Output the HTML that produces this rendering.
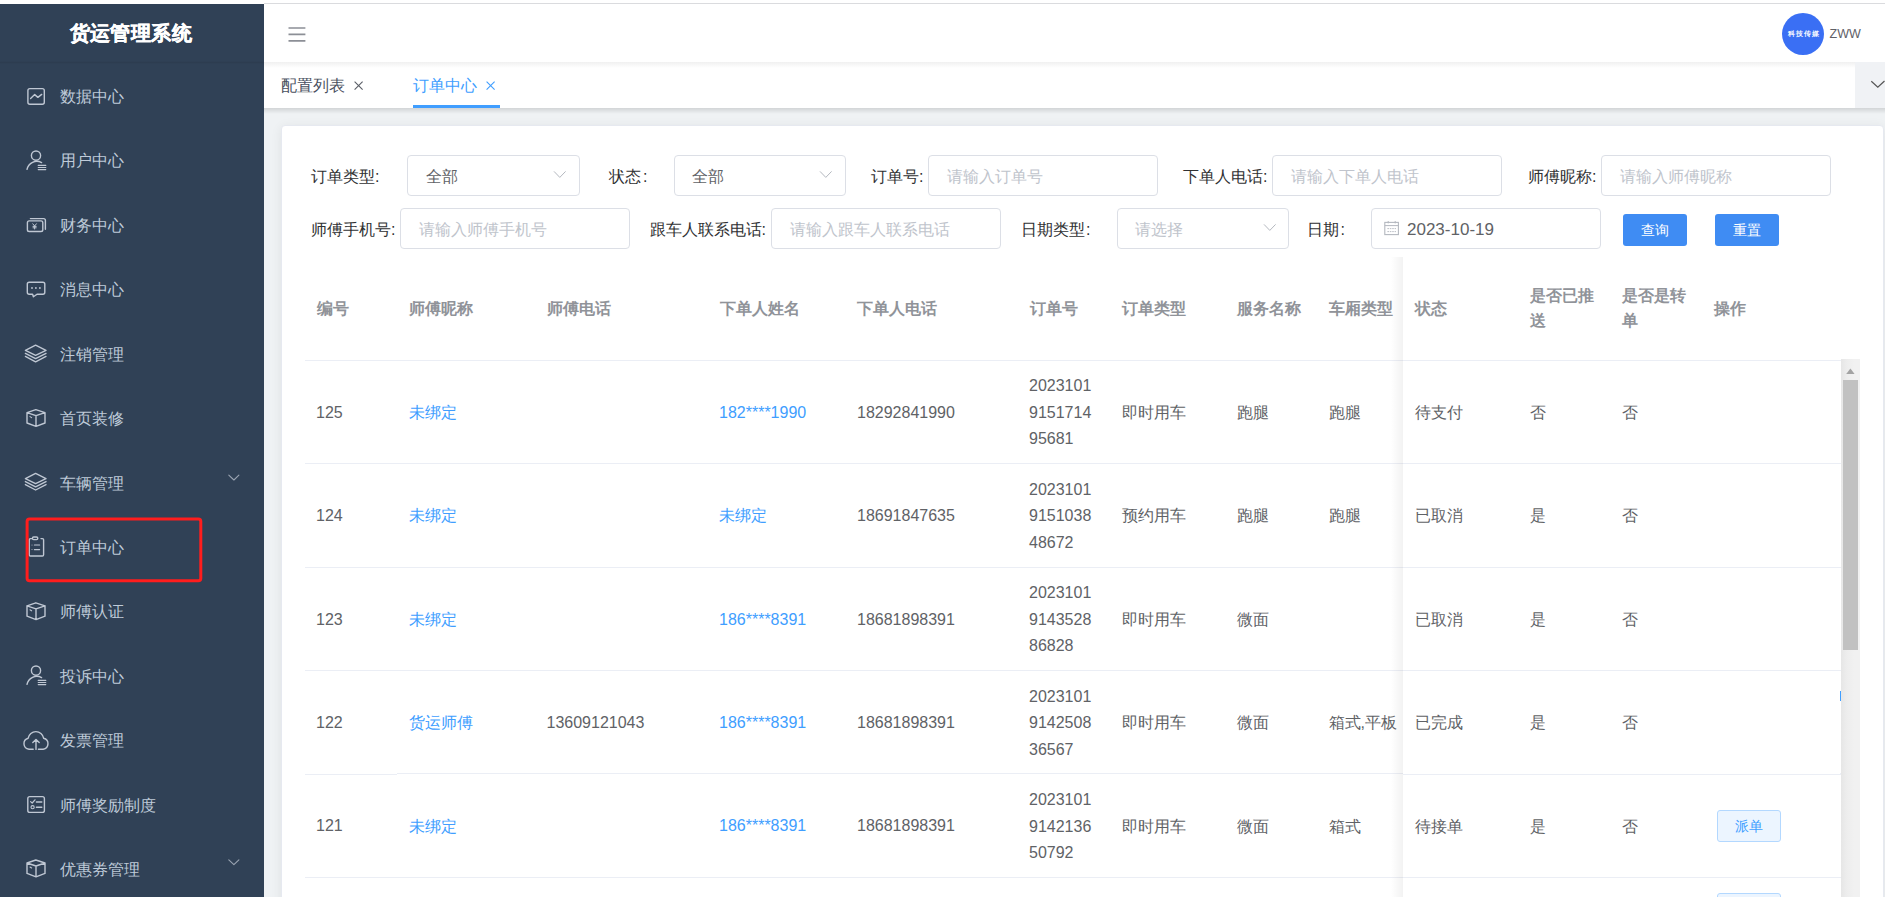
<!DOCTYPE html>
<html><head><meta charset="utf-8">
<style>
*{box-sizing:border-box;margin:0;padding:0}
html,body{width:1885px;height:897px;overflow:hidden;background:#fff;font-family:"Liberation Sans",sans-serif;}
.a{position:absolute;white-space:nowrap}
.t16{font-size:16px;line-height:16px}
#sb{position:absolute;left:0;top:4px;width:264px;height:893px;background:#304156}
.mi{position:absolute;left:60px;font-size:16px;line-height:16px;color:#bfcbd9;white-space:nowrap}
.lbl{position:absolute;font-size:16px;line-height:16px;color:#303133;white-space:nowrap}
.box{position:absolute;border:1px solid #dcdfe6;border-radius:4px;background:#fff}
.ph{position:absolute;font-size:16px;line-height:16px;color:#c0c4cc;white-space:nowrap}
.val{position:absolute;font-size:16px;line-height:16px;color:#606266;white-space:nowrap}
.btn{position:absolute;background:#3f8cf3;border-radius:3px;color:#fff;font-size:14px;line-height:32px;text-align:center}
.th{position:absolute;font-size:16px;line-height:16px;color:#909399;font-weight:bold;white-space:nowrap}
.td{position:absolute;font-size:16px;line-height:16px;color:#606266;white-space:nowrap}
.tdm{position:absolute;font-size:16px;line-height:26.5px;color:#606266;white-space:nowrap}
.lk{color:#409eff}
.hl{position:absolute;left:305px;width:1536px;height:1px;background:#ebeef5}
</style></head><body>
<!-- top line -->
<div class="a" style="left:264px;top:3px;width:1621px;height:1px;background:#dadbde"></div>

<!-- sidebar -->
<div id="sb"></div>
<div class="a" style="left:0;top:61px;width:264px;height:3px;background:linear-gradient(rgba(0,0,0,0),rgba(0,0,0,.07) 50%,rgba(0,0,0,0))"></div>
<div class="a" style="left:69.5px;top:22.5px;font-size:20.2px;line-height:21px;font-weight:bold;color:#fff;letter-spacing:0.45px;-webkit-text-stroke:0.4px #fff">货运管理系统</div>
<div class="mi" style="top:89px">数据中心</div>
<div class="mi" style="top:153.4px">用户中心</div>
<div class="mi" style="top:217.8px">财务中心</div>
<div class="mi" style="top:282.3px">消息中心</div>
<div class="mi" style="top:346.7px">注销管理</div>
<div class="mi" style="top:411.1px">首页装修</div>
<div class="mi" style="top:475.5px">车辆管理</div>
<div class="mi" style="top:539.9px">订单中心</div>
<div class="mi" style="top:604.4px">师傅认证</div>
<div class="mi" style="top:668.8px">投诉中心</div>
<div class="mi" style="top:733.2px">发票管理</div>
<div class="mi" style="top:797.6px">师傅奖励制度</div>
<div class="mi" style="top:862px">优惠券管理</div>
<svg class="a" style="left:0;top:0" width="264" height="897" viewBox="0 0 264 897" fill="none" stroke="#bfc7d3" stroke-width="1.4" stroke-linecap="round" stroke-linejoin="round">
  <!-- data line -->
  <rect x="27.9" y="88.6" width="16.4" height="15.6" rx="2"/>
  <path d="M30.6 98.4 L34.7 94.6 L37.9 97.4 L41.7 94.4"/>
  <!-- user -->
  <circle cx="36" cy="155.6" r="4.6"/>
  <path d="M27 169.4 A10 10 0 0 1 41.6 162.6"/>
  <path d="M38.2 165.4 H45.8 M38.2 167.5 H45.8 M38.2 169.6 H45.8" stroke-width="1.1"/>
  <!-- money -->
  <rect x="27.4" y="220.9" width="15.4" height="10.6" rx="1.8"/>
  <path d="M30.4 218.6 H43.6 Q45.4 218.6 45.4 220.4 V229.2"/>
  <path d="M32.8 223.8 L34.6 226 L36.4 223.8 M34.6 226 V229 M33 226.4 H36.2 M33 227.8 H36.2" stroke-width="1"/>
  <!-- chat -->
  <path d="M29.2 282.2 H42.9 Q44.8 282.2 44.8 284.1 V292.3 Q44.8 294.2 42.9 294.2 H37 L33.4 296.8 L32.6 294.2 H29.2 Q27.3 294.2 27.3 292.3 V284.1 Q27.3 282.2 29.2 282.2 Z"/>
  <circle cx="32" cy="288" r="0.9" fill="#bfc7d3" stroke="none"/>
  <circle cx="35.9" cy="288" r="0.9" fill="#bfc7d3" stroke="none"/>
  <circle cx="39.9" cy="288" r="0.9" fill="#bfc7d3" stroke="none"/>
  <!-- layers (注销管理) -->
  <path d="M25.4 350.4 L35.6 345.2 L46 350.4 L35.6 355.4 Z"/>
  <path d="M25.4 353.4 L35.6 358.6 L46 353.4"/>
  <path d="M25.4 356.4 L35.6 361.8 L46 356.4"/>
  <!-- cube (首页装修) -->
  <path d="M35.8 409.6 L27 412.6 V423 L36 426.4 L45 423 V412.6 Z M27 412.6 L36 415.6 L45 412.6 M36 415.6 V426.4"/>
  <path d="M30 416.6 L31.6 417.6" stroke-width="1.1"/>
  <!-- layers (车辆管理) -->
  <path d="M25.4 478.6 L35.6 473.4 L46 478.6 L35.6 483.6 Z"/>
  <path d="M25.4 481.6 L35.6 486.8 L46 481.6"/>
  <path d="M25.4 484.6 L35.6 490 L46 484.6"/>
  <path d="M228.8 475.2 L233.9 480 L238.9 475.2" stroke="#9aa4b2" stroke-width="1.1"/>
  <!-- clipboard -->
  <path d="M31.6 538.6 H30.4 Q29.2 538.6 29.2 539.8 V554.8 Q29.2 556 30.4 556 H42.4 Q43.6 556 43.6 554.8 V539.8 Q43.6 538.6 42.4 538.6 H41"/>
  <rect x="32.4" y="537" width="5.4" height="2.6" rx="1.3"/>
  <path d="M34.4 545 H39.6 M34.4 549.6 H39.6" stroke-width="1.2"/>
  <circle cx="32" cy="545" r="0.5" fill="#bfc7d3" stroke="none"/>
  <circle cx="32" cy="549.6" r="0.5" fill="#bfc7d3" stroke="none"/>
  <!-- cube (师傅认证) -->
  <path d="M35.8 602.8 L27 605.8 V616.2 L36 619.6 L45 616.2 V605.8 Z M27 605.8 L36 608.8 L45 605.8 M36 608.8 V619.6"/>
  <path d="M30 609.8 L31.6 610.8" stroke-width="1.1"/>
  <!-- user (投诉中心) -->
  <circle cx="36" cy="670.6" r="4.6"/>
  <path d="M27 684.4 A10 10 0 0 1 41.6 677.6"/>
  <path d="M38.2 680.4 H45.8 M38.2 682.5 H45.8 M38.2 684.6 H45.8" stroke-width="1.1"/>
  <!-- cloud upload -->
  <path d="M33.2 749.2 H29 A5.6 5.6 0 0 1 28.2 738.2 A7.8 7.8 0 0 1 43.6 738.2 A5.6 5.6 0 0 1 43.2 749.2 H38.4"/>
  <path d="M36 749.4 V739.8 M32.8 742.6 L36 739.4 L39.2 742.6"/>
  <!-- checklist -->
  <rect x="27.8" y="796.6" width="16.6" height="15.8" rx="2"/>
  <path d="M30.6 801.6 L32.2 803 L35 799.8" stroke-width="1.2"/>
  <circle cx="32.6" cy="807.2" r="1.6" stroke-width="1.1"/>
  <path d="M36.4 802 H41.8 M36.4 807.2 H41.8" stroke-width="1.4"/>
  <!-- cube (优惠券管理) -->
  <path d="M35.8 860 L27 863 V873.4 L36 876.8 L45 873.4 V863 Z M27 863 L36 866 L45 863 M36 866 V876.8"/>
  <path d="M30 867 L31.6 868" stroke-width="1.1"/>
  <path d="M228.8 859.8 L233.9 864.6 L238.9 859.8" stroke="#9aa4b2" stroke-width="1.1"/>
  <!-- red highlight -->
  <rect x="27.1" y="519" width="173.7" height="61.7" rx="2.5" stroke="#ff1d1d" stroke-width="3"/>
</svg>

<!-- navbar -->
<div class="a" style="left:264px;top:4px;width:1621px;height:58px;background:#fff"></div>
<svg class="a" style="left:280px;top:20px" width="40" height="30" viewBox="0 0 40 30"><path d="M8.5 8 H25.4 M8.5 14.4 H25.4 M8.5 20.9 H25.4" stroke="#8c8f96" stroke-width="1.7"/></svg>
<div class="a" style="left:1782px;top:13px;width:42px;height:42px;border-radius:50%;background:#3a6ff4"></div>
<div class="a" style="left:1785px;top:29px;width:36px;font-size:7.2px;line-height:10px;color:#f4f7ff;text-align:center;font-weight:bold;letter-spacing:1px;text-indent:1px">科技传媒</div>
<div class="a" style="left:1829.5px;top:26px;font-size:12.5px;line-height:16px;color:#5e6066">ZWW</div>

<!-- tags view -->
<div class="a" style="left:264px;top:62px;width:1621px;height:46px;background:#fff"></div>
<div class="a" style="left:264px;top:62px;width:1621px;height:6px;background:linear-gradient(rgba(0,0,0,.06),rgba(0,0,0,0))"></div>
<div class="a" style="left:281px;top:78px;font-size:16px;line-height:16px;color:#495060">配置列表</div>
<svg class="a" style="left:350px;top:77px" width="20" height="20"><path d="M4.6 4.6 L12.6 12.6 M12.6 4.6 L4.6 12.6" stroke="#5a5e66" stroke-width="1.1"/></svg>
<div class="a" style="left:413px;top:78px;font-size:16px;line-height:16px;color:#409eff">订单中心</div>
<svg class="a" style="left:482px;top:77px" width="20" height="20"><path d="M4.6 4.6 L12.6 12.6 M12.6 4.6 L4.6 12.6" stroke="#409eff" stroke-width="1.1"/></svg>
<div class="a" style="left:413px;top:105px;width:87px;height:3px;background:#409eff"></div>
<div class="a" style="left:1855px;top:62px;width:30px;height:46px;background:#f0f2f5"></div>
<svg class="a" style="left:1855px;top:62px" width="30" height="46"><path d="M16.3 19.3 L22.8 25.3 L29.5 19" fill="none" stroke="#555" stroke-width="1.2"/></svg>

<!-- content bg -->
<div class="a" style="left:264px;top:108px;width:1621px;height:789px;background:#eff2f4"></div>
<div class="a" style="left:264px;top:108px;width:1621px;height:6px;background:linear-gradient(rgba(0,0,0,.12),rgba(0,0,0,0))"></div>
<div class="a" style="left:281px;top:125px;width:1603px;height:800px;background:#fff;border-radius:4px;border:1px solid #e6e9f0;box-shadow:0 2px 12px 0 rgba(0,0,0,.07)"></div>

<!-- form row 1 -->
<div class="lbl" style="left:311px;top:169px">订单类型:</div>
<div class="box" style="left:407px;top:155px;width:173px;height:41px"></div>
<div class="val" style="left:425.5px;top:169px">全部</div>
<div class="lbl" style="left:608.5px;top:169px">状态<span style="margin-left:2.5px">:</span></div>
<div class="box" style="left:673.5px;top:155px;width:172px;height:41px"></div>
<div class="val" style="left:692px;top:169px">全部</div>
<div class="lbl" style="left:871px;top:169px">订单号:</div>
<div class="box" style="left:928px;top:155px;width:230px;height:41px"></div>
<div class="ph" style="left:946.5px;top:169px">请输入订单号</div>
<div class="lbl" style="left:1183px;top:169px">下单人电话:</div>
<div class="box" style="left:1272px;top:155px;width:230px;height:41px"></div>
<div class="ph" style="left:1290.5px;top:169px">请输入下单人电话</div>
<div class="lbl" style="left:1528px;top:169px">师傅昵称:</div>
<div class="box" style="left:1601px;top:155px;width:230px;height:41px"></div>
<div class="ph" style="left:1619.5px;top:169px">请输入师傅昵称</div>
<!-- form row 2 -->
<div class="lbl" style="left:311px;top:222px">师傅手机号:</div>
<div class="box" style="left:400px;top:208px;width:230px;height:41px"></div>
<div class="ph" style="left:418.5px;top:222px">请输入师傅手机号</div>
<div class="lbl" style="left:649.5px;top:222px">跟车人联系电话:</div>
<div class="box" style="left:771px;top:208px;width:230px;height:41px"></div>
<div class="ph" style="left:789.5px;top:222px">请输入跟车人联系电话</div>
<div class="lbl" style="left:1020.5px;top:222px">日期类型<span style="margin-left:1.5px">:</span></div>
<div class="box" style="left:1117px;top:208px;width:172px;height:41px"></div>
<div class="ph" style="left:1135px;top:222px">请选择</div>
<div class="lbl" style="left:1307px;top:222px">日期<span style="margin-left:1.5px">:</span></div>
<div class="box" style="left:1371px;top:208px;width:230px;height:41px"></div>
<div class="val" style="left:1407px;top:221px;font-size:17px;line-height:17px">2023-10-19</div>
<div class="btn" style="left:1623px;top:214px;width:64px;height:32px">查询</div>
<div class="btn" style="left:1715px;top:214px;width:64px;height:32px">重置</div>
<svg class="a" style="left:0;top:0" width="1885" height="260" fill="none" stroke="#b4b8bf" stroke-width="1">
  <path d="M554 171.4 L559.8 177.4 L565.6 171.4"/>
  <path d="M820 171.4 L825.8 177.4 L831.6 171.4"/>
  <path d="M1264 224.4 L1269.8 230.4 L1275.6 224.4"/>
  <rect x="1384.8" y="222.4" width="13.6" height="12.2" stroke-width="1.1"/>
  <path d="M1384.8 225.6 H1398.4 M1388.2 221 V223.4 M1395.2 221 V223.4" stroke-width="1"/>
  <path d="M1387.4 228.6 H1396 M1387.4 231.6 H1396" stroke-width="0.9" stroke-dasharray="1.6 0.8"/>
</svg>

<!-- table -->
<div class="th" style="left:316.5px;top:301px">编号</div>
<div class="th" style="left:408.5px;top:301px">师傅昵称</div>
<div class="th" style="left:546.5px;top:301px">师傅电话</div>
<div class="th" style="left:719.5px;top:301px">下单人姓名</div>
<div class="th" style="left:857px;top:301px">下单人电话</div>
<div class="th" style="left:1029.5px;top:301px">订单号</div>
<div class="th" style="left:1121.5px;top:301px">订单类型</div>
<div class="th" style="left:1236.5px;top:301px">服务名称</div>
<div class="th" style="left:1328.5px;top:301px">车厢类型</div>

<div class="hl" style="top:360px"></div>
<div class="hl" style="top:463px"></div>
<div class="hl" style="top:567px"></div>
<div class="hl" style="top:670px"></div>
<div class="hl" style="top:773px"></div>
<div class="hl" style="top:774px;width:92px"></div>
<div class="a" style="left:305px;top:773px;width:92px;height:1px;background:#fff"></div>
<div class="hl" style="top:877px"></div>

<!-- rows left part -->
<div class="td" style="left:316px;top:405px">125</div>
<div class="td lk" style="left:408.5px;top:405px">未绑定</div>
<div class="td lk" style="left:719px;top:405px">182****1990</div>
<div class="td" style="left:857px;top:405px">18292841990</div>
<div class="tdm" style="left:1029px;top:373px">2023101<br>9151714<br>95681</div>
<div class="td" style="left:1121.5px;top:405px">即时用车</div>
<div class="td" style="left:1236.5px;top:405px">跑腿</div>
<div class="td" style="left:1328.5px;top:405px">跑腿</div>

<div class="td" style="left:316px;top:508px">124</div>
<div class="td lk" style="left:408.5px;top:508px">未绑定</div>
<div class="td lk" style="left:719px;top:508px">未绑定</div>
<div class="td" style="left:857px;top:508px">18691847635</div>
<div class="tdm" style="left:1029px;top:476.5px">2023101<br>9151038<br>48672</div>
<div class="td" style="left:1121.5px;top:508px">预约用车</div>
<div class="td" style="left:1236.5px;top:508px">跑腿</div>
<div class="td" style="left:1328.5px;top:508px">跑腿</div>

<div class="td" style="left:316px;top:612px">123</div>
<div class="td lk" style="left:408.5px;top:612px">未绑定</div>
<div class="td lk" style="left:719px;top:612px">186****8391</div>
<div class="td" style="left:857px;top:612px">18681898391</div>
<div class="tdm" style="left:1029px;top:580px">2023101<br>9143528<br>86828</div>
<div class="td" style="left:1121.5px;top:612px">即时用车</div>
<div class="td" style="left:1236.5px;top:612px">微面</div>

<div class="td" style="left:316px;top:714.5px">122</div>
<div class="td lk" style="left:408.5px;top:715px">货运师傅</div>
<div class="td" style="left:546.5px;top:714.5px">13609121043</div>
<div class="td lk" style="left:719px;top:714.5px">186****8391</div>
<div class="td" style="left:857px;top:714.5px">18681898391</div>
<div class="tdm" style="left:1029px;top:683.5px">2023101<br>9142508<br>36567</div>
<div class="td" style="left:1121.5px;top:715px">即时用车</div>
<div class="td" style="left:1236.5px;top:715px">微面</div>
<div class="td" style="left:1328.5px;top:715px">箱式,平板</div>

<div class="td" style="left:316px;top:818px">121</div>
<div class="td lk" style="left:408.5px;top:818.5px">未绑定</div>
<div class="td lk" style="left:719px;top:818px">186****8391</div>
<div class="td" style="left:857px;top:818px">18681898391</div>
<div class="tdm" style="left:1029px;top:787px">2023101<br>9142136<br>50792</div>
<div class="td" style="left:1121.5px;top:818.5px">即时用车</div>
<div class="td" style="left:1236.5px;top:818.5px">微面</div>
<div class="td" style="left:1328.5px;top:818.5px">箱式</div>

<!-- fixed right -->
<div class="a" style="left:1391px;top:257px;width:12px;height:640px;background:linear-gradient(to right,rgba(0,0,0,0),rgba(0,0,0,.05))"></div>
<div class="a" style="left:1403px;top:257px;width:437px;height:640px;background:#fff"></div>
<div class="hl" style="left:1403px;width:438px;top:360px"></div>
<div class="hl" style="left:1403px;width:438px;top:463px"></div>
<div class="hl" style="left:1403px;width:438px;top:567px"></div>
<div class="hl" style="left:1403px;width:438px;top:670px"></div>
<div class="hl" style="left:1403px;width:438px;top:774px"></div>
<div class="hl" style="left:1403px;width:438px;top:877px"></div>
<div class="th" style="left:1414.5px;top:301px">状态</div>
<div class="th" style="left:1529.5px;top:288.5px;line-height:25px;top:283px">是否已推<br>送</div>
<div class="th" style="left:1621.5px;top:283px;line-height:25px">是否是转<br>单</div>
<div class="th" style="left:1713.5px;top:301px">操作</div>

<div class="td" style="left:1414.5px;top:405px">待支付</div>
<div class="td" style="left:1529.5px;top:405px">否</div>
<div class="td" style="left:1621.5px;top:405px">否</div>
<div class="td" style="left:1414.5px;top:508px">已取消</div>
<div class="td" style="left:1529.5px;top:508px">是</div>
<div class="td" style="left:1621.5px;top:508px">否</div>
<div class="td" style="left:1414.5px;top:612px">已取消</div>
<div class="td" style="left:1529.5px;top:612px">是</div>
<div class="td" style="left:1621.5px;top:612px">否</div>
<div class="td" style="left:1414.5px;top:715px">已完成</div>
<div class="td" style="left:1529.5px;top:715px">是</div>
<div class="td" style="left:1621.5px;top:715px">否</div>
<div class="td" style="left:1414.5px;top:818.5px">待接单</div>
<div class="td" style="left:1529.5px;top:818.5px">是</div>
<div class="td" style="left:1621.5px;top:818.5px">否</div>
<div class="a" style="left:1717px;top:810px;width:64px;height:32px;background:#ecf5ff;border:1px solid #b3d8ff;border-radius:3px;color:#409eff;font-size:14px;line-height:30px;text-align:center">派单</div>
<div class="a" style="left:1717px;top:893px;width:64px;height:32px;background:#ecf5ff;border:1px solid #b3d8ff;border-radius:3px"></div>
<div class="a" style="left:1840px;top:691px;width:1px;height:10px;background:#409eff"></div>

<!-- scrollbar -->
<div class="a" style="left:1841px;top:359px;width:19px;height:538px;background:linear-gradient(to right,#e6e6e6,#ededed 30%,#f1f1f1 70%)"></div>
<div class="a" style="left:1843px;top:380px;width:15px;height:270px;background:#c1c1c1"></div>
<svg class="a" style="left:1840px;top:359px" width="20" height="20"><path d="M6.2 15 L10.4 9.6 L14.6 15 Z" fill="#a3a3a3"/></svg>
</body></html>
